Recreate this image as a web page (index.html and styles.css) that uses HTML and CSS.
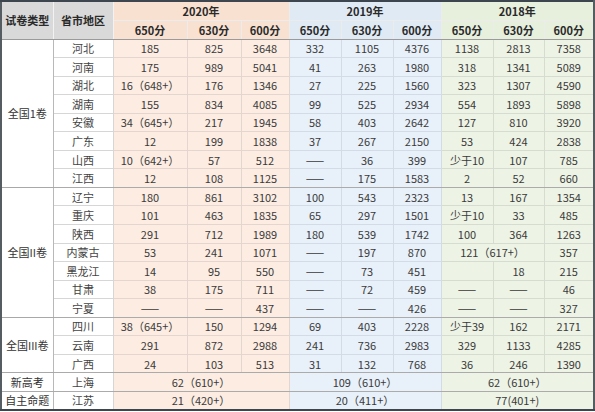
FILE: index.html
```html
<!DOCTYPE html>
<html lang="zh-CN">
<head>
<meta charset="utf-8">
<title>高分段人数统计</title>
<link rel="stylesheet" href="styles.css">
</head>
<body>
<table class="score-table">
  <colgroup>
    <col class="c-type">
    <col class="c-prov">
    <col class="c-a1"><col class="c-a2"><col class="c-a3">
    <col class="c-b1"><col class="c-b2"><col class="c-b3">
    <col class="c-c1"><col class="c-c2"><col class="c-c3">
  </colgroup>
  <thead>
    <tr class="h1">
      <th rowspan="2" class="gray">试卷类型</th>
      <th rowspan="2" class="gray">省市地区</th>
      <th colspan="3" class="y20">2020年</th>
      <th colspan="3" class="y19">2019年</th>
      <th colspan="3" class="y18">2018年</th>
    </tr>
    <tr class="h2">
      <th class="y20">650分</th><th class="y20">630分</th><th class="y20">600分</th>
      <th class="y19">650分</th><th class="y19">630分</th><th class="y19">600分</th>
      <th class="y18">650分</th><th class="y18">630分</th><th class="y18">600分</th>
    </tr>
  </thead>
  <tbody>
    <tr>
      <td rowspan="8" class="type grp">全国1卷</td>
      <td class="prov">河北</td>
      <td class="a">185</td><td class="a">825</td><td class="a">3648</td>
      <td class="b">332</td><td class="b">1105</td><td class="b">4376</td>
      <td class="c">1138</td><td class="c">2813</td><td class="c">7358</td>
    </tr>
    <tr>
      <td class="prov">河南</td>
      <td class="a">175</td><td class="a">989</td><td class="a">5041</td>
      <td class="b">41</td><td class="b">263</td><td class="b">1980</td>
      <td class="c">318</td><td class="c">1341</td><td class="c">5089</td>
    </tr>
    <tr>
      <td class="prov">湖北</td>
      <td class="a">16（648+）</td><td class="a">176</td><td class="a">1346</td>
      <td class="b">27</td><td class="b">225</td><td class="b">1560</td>
      <td class="c">323</td><td class="c">1307</td><td class="c">4590</td>
    </tr>
    <tr>
      <td class="prov">湖南</td>
      <td class="a">155</td><td class="a">834</td><td class="a">4085</td>
      <td class="b">99</td><td class="b">525</td><td class="b">2934</td>
      <td class="c">554</td><td class="c">1893</td><td class="c">5898</td>
    </tr>
    <tr>
      <td class="prov">安徽</td>
      <td class="a">34（645+）</td><td class="a">217</td><td class="a">1945</td>
      <td class="b">58</td><td class="b">403</td><td class="b">2642</td>
      <td class="c">127</td><td class="c">810</td><td class="c">3920</td>
    </tr>
    <tr>
      <td class="prov">广东</td>
      <td class="a">12</td><td class="a">199</td><td class="a">1838</td>
      <td class="b">37</td><td class="b">267</td><td class="b">2150</td>
      <td class="c">53</td><td class="c">424</td><td class="c">2838</td>
    </tr>
    <tr>
      <td class="prov">山西</td>
      <td class="a">10（642+）</td><td class="a">57</td><td class="a">512</td>
      <td class="b">——</td><td class="b">36</td><td class="b">399</td>
      <td class="c">少于10</td><td class="c">107</td><td class="c">785</td>
    </tr>
    <tr class="last">
      <td class="prov">江西</td>
      <td class="a">12</td><td class="a">108</td><td class="a">1125</td>
      <td class="b">——</td><td class="b">175</td><td class="b">1583</td>
      <td class="c">2</td><td class="c">52</td><td class="c">660</td>
    </tr>
    <tr>
      <td rowspan="7" class="type grp">全国II卷</td>
      <td class="prov">辽宁</td>
      <td class="a">180</td><td class="a">861</td><td class="a">3102</td>
      <td class="b">100</td><td class="b">543</td><td class="b">2323</td>
      <td class="c">13</td><td class="c">167</td><td class="c">1354</td>
    </tr>
    <tr>
      <td class="prov">重庆</td>
      <td class="a">101</td><td class="a">463</td><td class="a">1835</td>
      <td class="b">65</td><td class="b">297</td><td class="b">1501</td>
      <td class="c">少于10</td><td class="c">33</td><td class="c">485</td>
    </tr>
    <tr>
      <td class="prov">陕西</td>
      <td class="a">291</td><td class="a">712</td><td class="a">1989</td>
      <td class="b">180</td><td class="b">539</td><td class="b">1742</td>
      <td class="c">100</td><td class="c">364</td><td class="c">1263</td>
    </tr>
    <tr>
      <td class="prov">内蒙古</td>
      <td class="a">53</td><td class="a">241</td><td class="a">1071</td>
      <td class="b">——</td><td class="b">197</td><td class="b">870</td>
      <td class="c" colspan="2">121（617+）</td><td class="c">357</td>
    </tr>
    <tr>
      <td class="prov">黑龙江</td>
      <td class="a">14</td><td class="a">95</td><td class="a">550</td>
      <td class="b">——</td><td class="b">73</td><td class="b">451</td>
      <td class="c"></td><td class="c">18</td><td class="c">215</td>
    </tr>
    <tr>
      <td class="prov">甘肃</td>
      <td class="a">38</td><td class="a">175</td><td class="a">711</td>
      <td class="b">——</td><td class="b">72</td><td class="b">459</td>
      <td class="c">——</td><td class="c">——</td><td class="c">46</td>
    </tr>
    <tr class="last">
      <td class="prov">宁夏</td>
      <td class="a">——</td><td class="a">——</td><td class="a">437</td>
      <td class="b">——</td><td class="b">——</td><td class="b">426</td>
      <td class="c">——</td><td class="c">——</td><td class="c">327</td>
    </tr>
    <tr>
      <td rowspan="3" class="type grp">全国III卷</td>
      <td class="prov">四川</td>
      <td class="a">38（645+）</td><td class="a">150</td><td class="a">1294</td>
      <td class="b">69</td><td class="b">403</td><td class="b">2228</td>
      <td class="c">少于39</td><td class="c">162</td><td class="c">2171</td>
    </tr>
    <tr>
      <td class="prov">云南</td>
      <td class="a">291</td><td class="a">872</td><td class="a">2988</td>
      <td class="b">241</td><td class="b">736</td><td class="b">2983</td>
      <td class="c">329</td><td class="c">1133</td><td class="c">4285</td>
    </tr>
    <tr class="last">
      <td class="prov">广西</td>
      <td class="a">24</td><td class="a">103</td><td class="a">513</td>
      <td class="b">31</td><td class="b">132</td><td class="b">768</td>
      <td class="c">36</td><td class="c">246</td><td class="c">1390</td>
    </tr>
    <tr class="last">
      <td class="type">新高考</td>
      <td class="prov">上海</td>
      <td class="a" colspan="3">62（610+）</td>
      <td class="b" colspan="3">109（610+）</td>
      <td class="c" colspan="3">62（610+）</td>
    </tr>
    <tr class="last">
      <td class="type">自主命题</td>
      <td class="prov">江苏</td>
      <td class="a" colspan="3">21（420+）</td>
      <td class="b" colspan="3">20（411+）</td>
      <td class="c" colspan="3">77(401+)</td>
    </tr>
  </tbody>
</table>
</body>
</html>
```
FILE: styles.css
```css
html, body {
  margin: 0;
  padding: 0;
  background: #ffffff;
}

.score-table {
  border-collapse: collapse;
  table-layout: fixed;
  width: 594px;
  font-family: "Noto Sans CJK SC", "Noto Sans", sans-serif;
  font-size: 11px;
  color: #3a3a3a;
  border-top: 2px solid #3d464e;
  border-bottom: 2px solid #3d464e;
  border-left: 2px solid #555c62;
  border-right: 2px solid #555c62;
}

.c-type { width: 52px; }
.c-prov { width: 60px; }
.c-a1 { width: 74px; }
.c-a2 { width: 54px; }
.c-a3 { width: 48px; }
.c-b1 { width: 52px; }
.c-b2 { width: 52px; }
.c-b3 { width: 48px; }
.c-c1 { width: 52px; }
.c-c2 { width: 51px; }
.c-c3 { width: 50px; }

th, td {
  padding: 0;
  text-align: center;
  vertical-align: middle;
  white-space: nowrap;
  line-height: 16px;
}

thead th {
  font-weight: 700;
  color: #2a2a2a;
  border: 1px solid #ececec;
}

.h1 { height: 19px; }
.h2 { height: 19px; }
.h2 th { border-bottom: 1px solid #9a9a9a; }
thead .gray {
  background: #d9d9d9;
  border-bottom: 1px solid #9a9a9a;
  border-right: 1px solid #f2f2f2;
}

th.y20 { background: #f8e1d1; }
th.y19 { background: #e0eaf5; }
th.y18 { background: #e7efdd; }

tbody tr { height: 18.55px; }

tbody td {
  border: 1px solid #dadada;
  font-weight: 400;
}

td.type {
  background: #ffffff;
  border-right: 1px solid #b8b8b8;
  border-bottom: 1px solid #a8a8a8;
  color: #333;
}
td.prov {
  background: #ffffff;
  border-color: #d6d6d6;
  color: #444;
}

td.a { background: #fcece2; border-color: #e4d6cf; }
td.b { background: #e8f0f9; border-color: #d3dce6; }
td.c { background: #edf3e5; border-color: #d6ddd0; }

tr.last td { border-bottom: 1px solid #ababab; }
```
